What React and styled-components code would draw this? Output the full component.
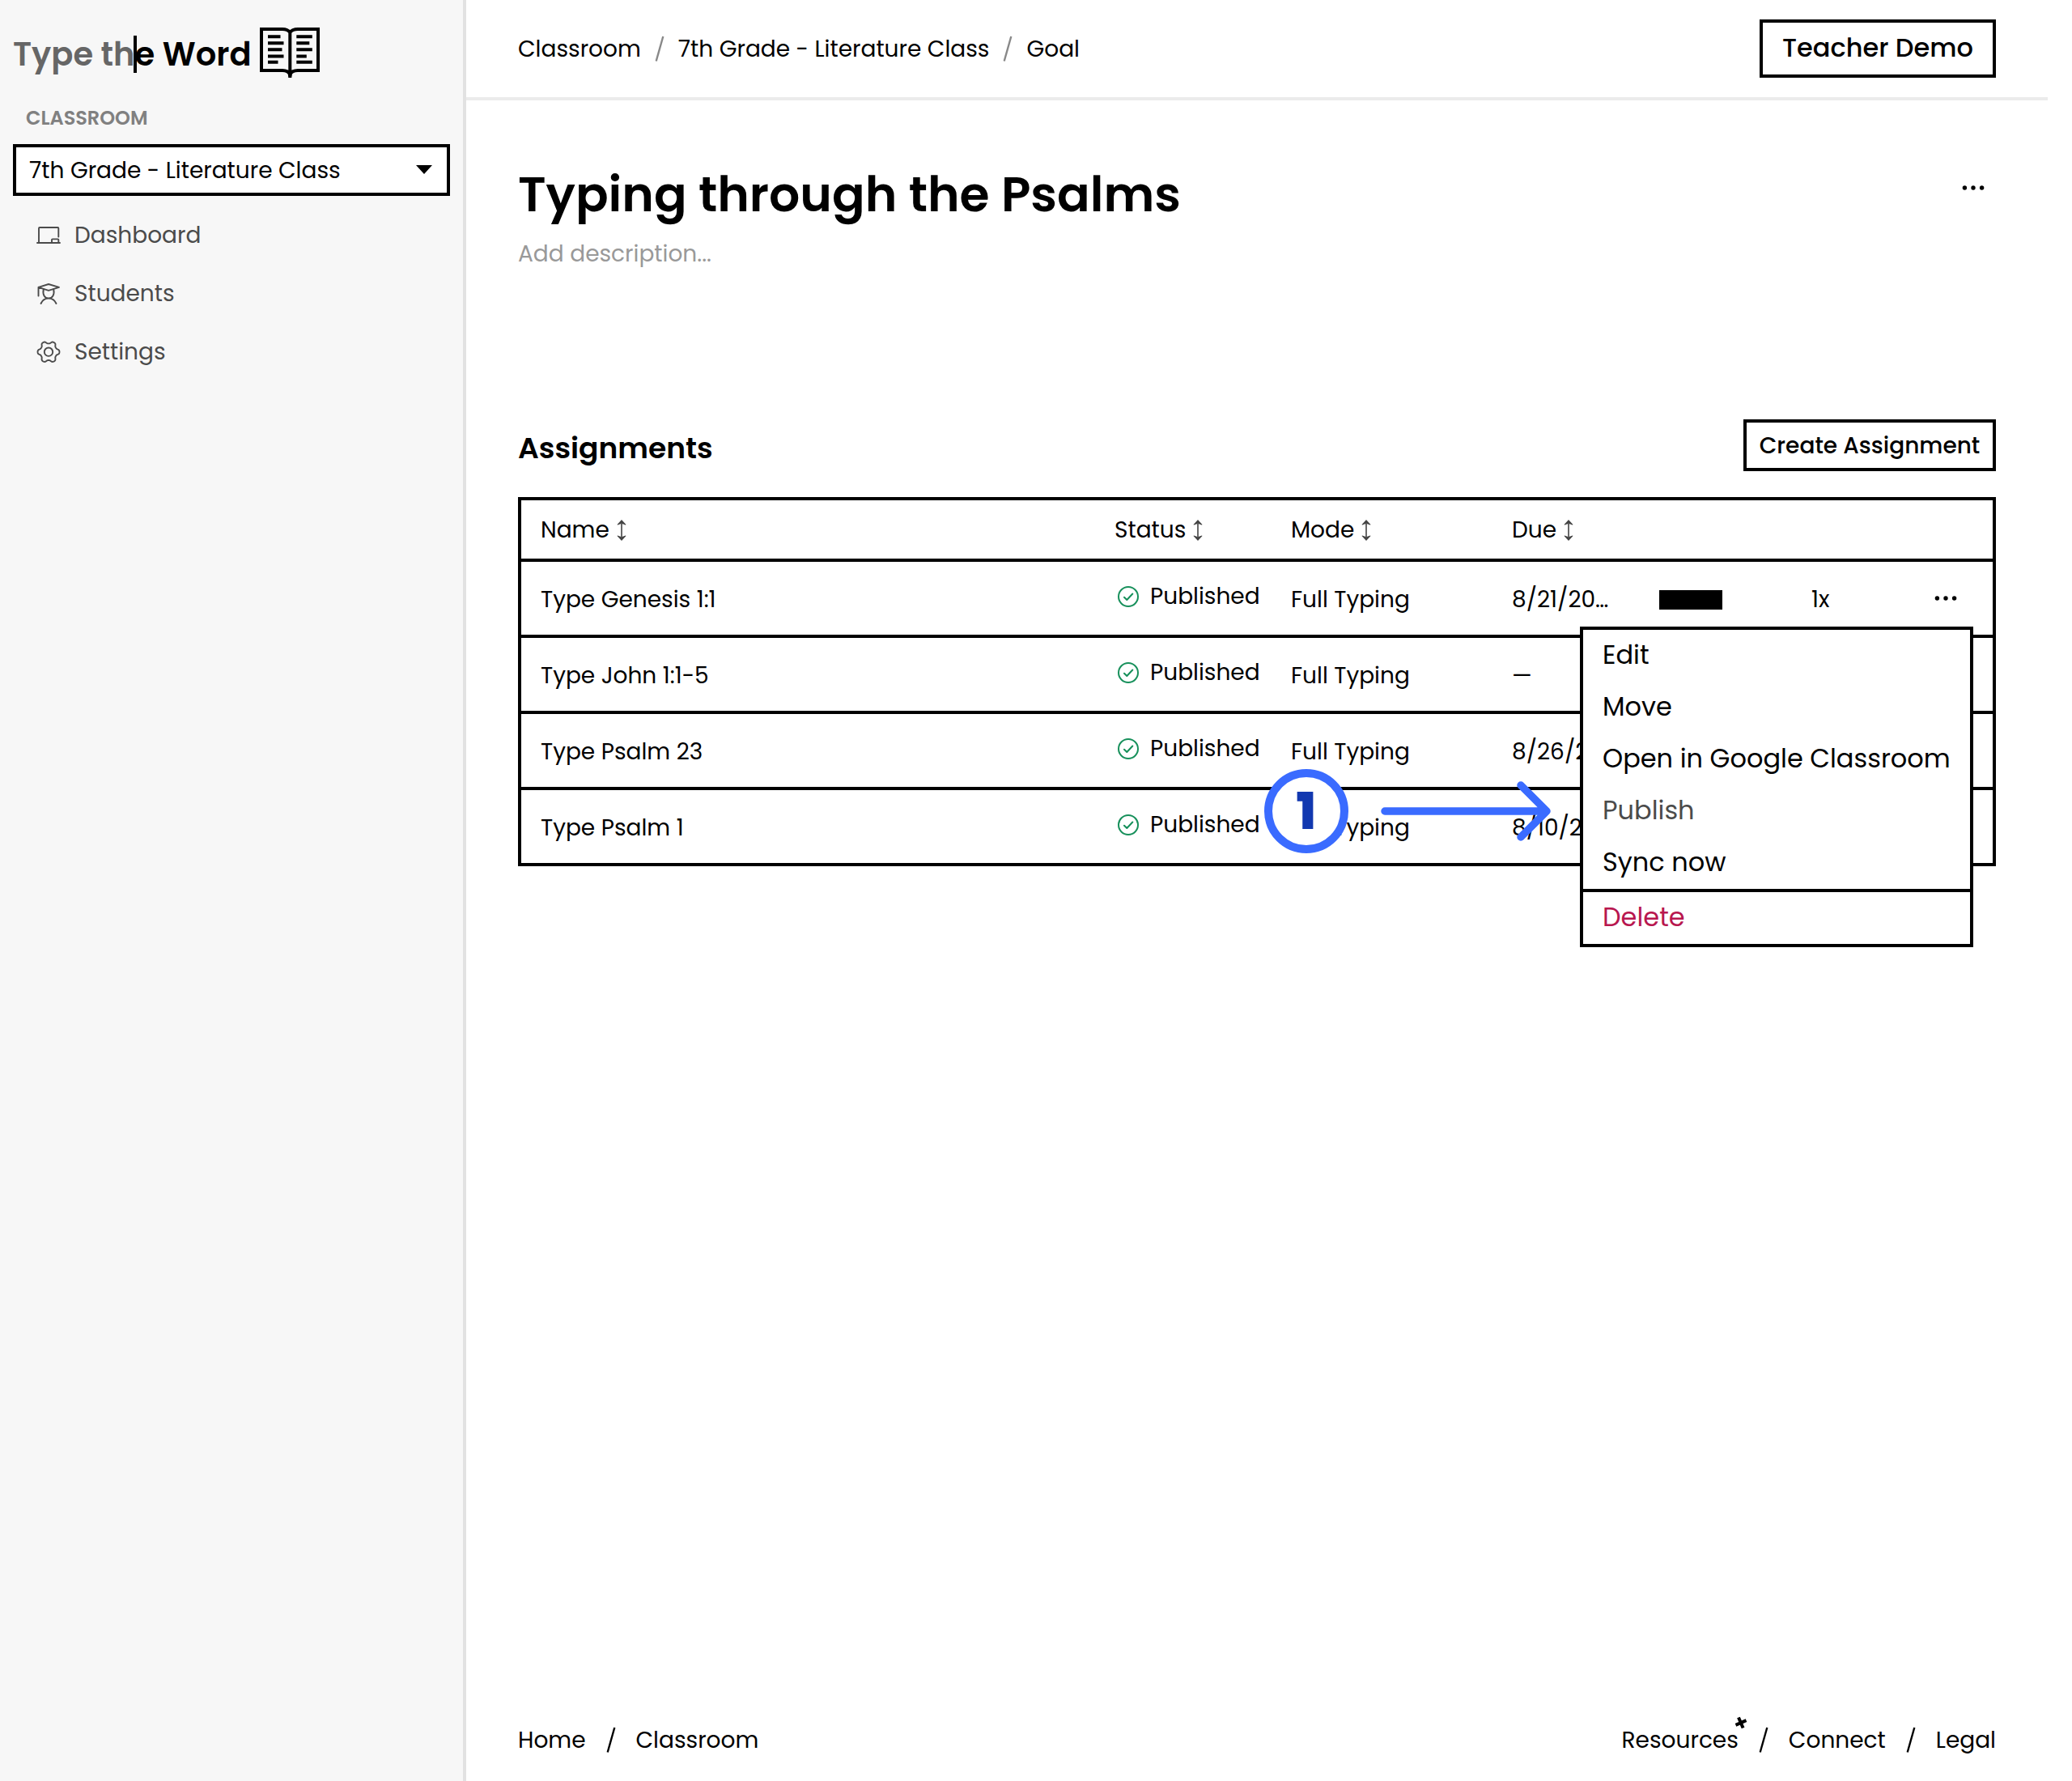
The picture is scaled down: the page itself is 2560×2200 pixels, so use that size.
import React from "react";
import styled, { createGlobalStyle, css } from "styled-components";

const ink = "#000";
const muted = "#4b4b4b";
const blue = "#3a6bff";

const GlobalStyle = createGlobalStyle`
  *, *::before, *::after { box-sizing: border-box; }
  body {
    margin: 0;
    background: #fff;
    color: ${ink};
    font-family: Poppins, Inter, "Liberation Sans", sans-serif;
    font-size: 28px;
    line-height: 40px;
  }
  button, input, select { font: inherit; color: inherit; }
  a { color: inherit; text-decoration: none; }
  h1, h2, p { margin: 0; }
  svg { display: block; }
`;

const Shell = styled.div`
  display: grid;
  grid-template-columns: 576px minmax(0, 1fr);
  min-height: 100vh;
  padding-right: 30px;
`;

const Sidebar = styled.aside`
  display: flex;
  flex-direction: column;
  padding: 32px 16px;
  background: #f7f7f7;
  border-right: 4px solid #e2e2e2;
`;

const Logo = styled.a`
  display: flex;
  align-items: center;
  gap: 10px;
  height: 64px;
  font-size: 40px;
  line-height: 60px;
  font-weight: 600;
`;

const LogoText = styled.span`
  padding-top: 6px;
`;

const Typed = styled.span`
  position: relative;
  color: #666;

  &::after {
    content: "";
    position: absolute;
    top: 5px;
    right: -2px;
    width: 4px;
    height: 46px;
    background: ${ink};
  }
`;

const ClassLabel = styled.label`
  margin: 34px 16px 16px;
  color: #808080;
  font-size: 24px;
  line-height: 32px;
  font-weight: 600;
  text-transform: uppercase;
`;

const SelectBox = styled.div`
  position: relative;

  svg {
    position: absolute;
    top: 26px;
    right: 22px;
    pointer-events: none;
  }
`;

const Select = styled.select`
  width: 100%;
  height: 64px;
  padding: 2px 16px 0;
  border: 4px solid ${ink};
  border-radius: 0;
  background: #fff;
  appearance: none;
`;

const SideNav = styled.nav`
  display: flex;
  flex-direction: column;
  margin-top: 13px;
`;

const SideLink = styled.a`
  display: flex;
  align-items: center;
  gap: 17px;
  height: 72px;
  padding-left: 29px;
  color: ${muted};
`;

const Page = styled.div`
  display: flex;
  flex-direction: column;
`;

const TopBar = styled.header`
  display: flex;
  align-items: center;
  justify-content: space-between;
  height: 124px;
  padding: 0 64px;
  border-bottom: 4px solid #ebebeb;
`;

const Crumbs = styled.nav`
  display: flex;
  align-items: center;
  gap: 17px;
  padding-top: 2px;
`;

const OutlineButton = styled.button`
  border: 4px solid ${ink};
  background: #fff;
  font-weight: 500;
  ${(p) =>
    p.$large
      ? css`
          min-width: 292px;
          height: 72px;
          padding: 0 0 2px;
          font-size: 32px;
        `
      : css`
          min-width: 312px;
          height: 64px;
          padding: 2px 0 0;
        `}
`;

const Main = styled.main`
  flex: 1;
  padding: 76px 64px 0;
`;

const TitleRow = styled.div`
  display: flex;
  align-items: flex-start;
  justify-content: space-between;
`;

const Title = styled.h1`
  font-size: 60px;
  line-height: 80px;
  font-weight: 600;
`;

const IconButton = styled.button`
  display: inline-grid;
  place-items: center;
  width: 56px;
  height: 64px;
  padding: 0;
  border: 0;
  background: none;
  vertical-align: middle;
`;

const Description = styled.input`
  display: block;
  width: 100%;
  height: 40px;
  margin-top: 14px;
  padding: 0;
  border: 0;
  background: none;

  &::placeholder { color: #999; opacity: 1; }
`;

const SectionHead = styled.div`
  display: flex;
  align-items: flex-end;
  justify-content: space-between;
  margin: 184px 0 32px;
`;

const SectionTitle = styled.h2`
  padding-bottom: 6px;
  font-size: 36px;
  line-height: 44px;
  font-weight: 600;
`;

const TableArea = styled.div`
  position: relative;
`;

const Table = styled.table`
  width: 100%;
  table-layout: fixed;
  border: 4px solid ${ink};
  border-spacing: 0;
`;

const Col = styled.col`
  width: ${(p) => p.$width};
`;

const HeadCell = styled.th`
  height: 76px;
  padding: 2px 0 0 24px;
  border-bottom: 4px solid ${ink};
  font-weight: 400;
  text-align: left;
`;

const SortButton = styled.button`
  display: flex;
  align-items: center;
  gap: 9px;
  padding: 0;
  border: 0;
  background: none;
`;

const Row = styled.tr`
  height: 94px;

  &:last-child { height: 90px; }
  &:last-child > td { border-bottom: 0; }
`;

const Cell = styled.td`
  padding: 3px 0 0 24px;
  border-bottom: 4px solid ${ink};
  white-space: nowrap;
`;

const ActionCell = styled(Cell)`
  position: relative;
  padding: 0;
  text-align: center;
`;

const Status = styled.div`
  display: flex;
  align-items: center;
  gap: 14px;
  padding: 0 0 8px 4px;
`;

const Redacted = styled.div`
  width: 78px;
  height: 24px;
  background: ${ink};
`;

const Menu = styled.div`
  position: absolute;
  z-index: 1;
  top: 80px;
  right: 24px;
  display: flex;
  flex-direction: column;
  width: 486px;
  border: 4px solid ${ink};
  background: #fff;
`;

const MenuItem = styled.button`
  height: 64px;
  padding: 0 24px 2px;
  border: 0;
  background: none;
  color: ${(p) => p.$color || ink};
  font-size: 32px;
  text-align: left;
  white-space: nowrap;
`;

const MenuRule = styled.hr`
  width: 100%;
  height: 4px;
  margin: 0;
  border: 0;
  background: ${ink};
`;

const Callout = styled.div`
  position: absolute;
  z-index: 2;
  top: 336px;
  right: 550px;
  display: flex;
  align-items: center;
  gap: 40px;
  pointer-events: none;
`;

const CalloutNumber = styled.div`
  display: grid;
  place-items: center;
  width: 104px;
  height: 104px;
  border: 10px solid ${blue};
  border-radius: 50%;
  background: #fff;
  color: #1238b0;
  font-size: 64px;
  line-height: 64px;
  font-weight: 800;
`;

const Footer = styled.footer`
  display: flex;
  justify-content: space-between;
  padding: 0 64px 30px;
`;

const FooterGroup = styled.nav`
  display: flex;
  gap: 25px;
`;

const FooterLink = styled.a`
  position: relative;

  svg {
    position: absolute;
    top: -10px;
    right: -11px;
  }
`;

const BookIcon = () => (
  <svg width="75" height="64" viewBox="0 0 75 64" fill="none" stroke="#000" strokeWidth="4" aria-hidden="true">
    <path d="M37.3 8C35 5 32 4 28 4H2v51h26c5 0 7.500 1 9.300 5C39 56 42 55 47 55h25V4H47c-4 0-7.500 1-9.700 4v54" />
    <path d="M34.500 56h5.600l-.8 8h-4z" fill="#000" stroke="none" />
    <path d="M10 13.200h15.500M10 21.200h19.500M10 29.300h17.500M10 37.500h19.500M10 44.700h12.500M45.300 13.200h19.500M45.300 21.200h16M45.300 29.300h19.500M45.300 37.500h12.500M45.300 44.700h19.500" />
  </svg>
);

const LineIcon = ({ children }) => (
  <svg width="30" height="30" viewBox="0 0 30 30" fill="none" stroke="currentColor" strokeWidth="1.9" strokeLinecap="round" strokeLinejoin="round" aria-hidden="true">
    {children}
  </svg>
);

const BoardIcon = () => (
  <LineIcon>
    <path d="M3 24V6a1 1 0 0 1 1-1h22.300a1 1 0 0 1 1 1v10.500M1 24h28M19 24v-3.800a.8.8 0 0 1 .8-.8h6.700a.8.8 0 0 1 .8.8V24" />
  </LineIcon>
);

const StudentIcon = () => (
  <LineIcon>
    <path d="M2.500 17.500V6.800L15 3l13 3.800-13 4-12.500-4" />
    <path d="M8.800 9.200c-1.500 7 1.500 11.300 6.200 11.300s7.700-4.300 6.200-11.300M5.500 27c1.800-4 5.500-6.500 9.500-6.500s7.700 2.500 9.500 6.500" />
  </LineIcon>
);

const gearOutline =
  "M" +
  Array.from({ length: 120 }, (_, i) => {
    const a = (i / 120) * Math.PI * 2;
    const wave = Math.cos(6 * a);
    const r = 11.9 + 1.7 * Math.tanh(1.5 * wave);
    return `${(15 + r * Math.cos(a)).toFixed(2)} ${(14.7 + r * Math.sin(a)).toFixed(2)}`;
  }).join("L") +
  "Z";

const GearIcon = () => (
  <LineIcon>
    <path d={gearOutline} />
    <circle cx="15" cy="14.7" r="5.2" />
  </LineIcon>
);

const SortIcon = () => (
  <svg width="12" height="26" viewBox="0 0 12 26" fill="#444" aria-hidden="true">
    <path d="M5.200 5h1.600v16H5.200zM6 0l5.500 6-.6.6L6 4.800 1.100 6.600.5 6zM6 26l5.500-6-.6-.6L6 21.200l-4.900-1.800-.6.600z" />
  </svg>
);

const CheckIcon = () => (
  <svg width="26" height="26" viewBox="0 0 26 26" fill="none" stroke="#17905b" strokeWidth="2" strokeLinecap="round" strokeLinejoin="round" aria-hidden="true">
    <circle cx="13" cy="13" r="12" />
    <path d="M8 13.700l3.300 3.300 7-7.500" />
  </svg>
);

const DotsIcon = () => (
  <svg width="28" height="8" viewBox="0 0 28 8" aria-hidden="true">
    <circle cx="3.400" cy="4" r="2.700" />
    <circle cx="14" cy="4" r="2.700" />
    <circle cx="24.600" cy="4" r="2.700" />
  </svg>
);

const CaretIcon = () => (
  <svg width="20" height="11" viewBox="0 0 20 11" aria-hidden="true">
    <path d="M0 0h20L10 11z" />
  </svg>
);

const SlashIcon = ({ color = ink }) => (
  <svg width="12" height="40" viewBox="0 0 12 40" fill="none" stroke={color} strokeWidth="2.400" aria-hidden="true">
    <path d="M10.300 4L1.700 34.500" />
  </svg>
);

const CrossIcon = () => (
  <svg width="16" height="16" viewBox="0 0 16 16" fill="none" stroke="#000" strokeWidth="4" aria-hidden="true">
    <path d="M5 1.500l5.600 13M1.500 10.800l13-5.600" />
  </svg>
);

const ArrowIcon = () => (
  <svg width="210" height="76" viewBox="0 0 210 76" fill="none" stroke={blue} strokeWidth="9.500" strokeLinecap="round" strokeLinejoin="round" aria-hidden="true">
    <path d="M5 38h199M173 6l32 32-32 32" />
  </svg>
);

const columns = [
  { label: "Name", width: "auto" },
  { label: "Status", width: "218px" },
  { label: "Mode", width: "273px" },
  { label: "Due", width: "182px" },
  { width: "188px" },
  { width: "132px" },
  { width: "116px" },
];

const assignments = [
  { name: "Type Genesis 1:1", due: "8/21/20…", open: true },
  { name: "Type John 1:1-5", due: "—" },
  { name: "Type Psalm 23", due: "8/26/2…" },
  { name: "Type Psalm 1", due: "8/10/2…" },
];

const AssignmentMenu = () => (
  <Menu role="menu">
    <MenuItem role="menuitem">Edit</MenuItem>
    <MenuItem role="menuitem">Move</MenuItem>
    <MenuItem role="menuitem">Open in Google Classroom</MenuItem>
    <MenuItem role="menuitem" $color={muted} disabled>Publish</MenuItem>
    <MenuItem role="menuitem">Sync now</MenuItem>
    <MenuRule />
    <MenuItem role="menuitem" $color="#b8174f">Delete</MenuItem>
  </Menu>
);

export default function App() {
  return (
    <>
      <GlobalStyle />
      <Shell>
        <Sidebar>
          <Logo href="#home">
            <LogoText><Typed>Type th</Typed>e Word</LogoText>
            <BookIcon />
          </Logo>
          <ClassLabel htmlFor="classroom">Classroom</ClassLabel>
          <SelectBox>
            <Select id="classroom" defaultValue="lit">
              <option value="lit">7th Grade - Literature Class</option>
            </Select>
            <CaretIcon />
          </SelectBox>
          <SideNav>
            <SideLink href="#dashboard"><BoardIcon />Dashboard</SideLink>
            <SideLink href="#students"><StudentIcon />Students</SideLink>
            <SideLink href="#settings"><GearIcon />Settings</SideLink>
          </SideNav>
        </Sidebar>
        <Page>
          <TopBar>
            <Crumbs>
              <a href="#classroom">Classroom</a>
              <SlashIcon color="#888" />
              <a href="#class">7th Grade - Literature Class</a>
              <SlashIcon color="#888" />
              <a href="#goal">Goal</a>
            </Crumbs>
            <OutlineButton $large>Teacher Demo</OutlineButton>
          </TopBar>
          <Main>
            <TitleRow>
              <Title>Typing through the Psalms</Title>
              <IconButton aria-label="Goal options"><DotsIcon /></IconButton>
            </TitleRow>
            <Description aria-label="Description" placeholder="Add description..." />
            <SectionHead>
              <SectionTitle>Assignments</SectionTitle>
              <OutlineButton>Create Assignment</OutlineButton>
            </SectionHead>
            <TableArea>
              <Table>
                <colgroup>
                  {columns.map((c, i) => <Col key={i} $width={c.width} />)}
                </colgroup>
                <thead>
                  <tr>
                    {columns.map((c, i) => (
                      <HeadCell key={i}>
                        {c.label && <SortButton>{c.label}<SortIcon /></SortButton>}
                      </HeadCell>
                    ))}
                  </tr>
                </thead>
                <tbody>
                  {assignments.map((a) => (
                    <Row key={a.name}>
                      <Cell>{a.name}</Cell>
                      <Cell><Status><CheckIcon />Published</Status></Cell>
                      <Cell>Full Typing</Cell>
                      <Cell>{a.due}</Cell>
                      <Cell>{a.open && <Redacted />}</Cell>
                      <Cell>{a.open && "1x"}</Cell>
                      <ActionCell>
                        {a.open && (
                          <>
                            <IconButton aria-label="Assignment options"><DotsIcon /></IconButton>
                            <AssignmentMenu />
                          </>
                        )}
                      </ActionCell>
                    </Row>
                  ))}
                </tbody>
              </Table>
              <Callout>
                <CalloutNumber>1</CalloutNumber>
                <ArrowIcon />
              </Callout>
            </TableArea>
          </Main>
          <Footer>
            <FooterGroup>
              <FooterLink href="#home">Home</FooterLink>
              <SlashIcon />
              <FooterLink href="#classroom">Classroom</FooterLink>
            </FooterGroup>
            <FooterGroup>
              <FooterLink href="#resources">Resources<CrossIcon /></FooterLink>
              <SlashIcon />
              <FooterLink href="#connect">Connect</FooterLink>
              <SlashIcon />
              <FooterLink href="#legal">Legal</FooterLink>
            </FooterGroup>
          </Footer>
        </Page>
      </Shell>
    </>
  );
}
